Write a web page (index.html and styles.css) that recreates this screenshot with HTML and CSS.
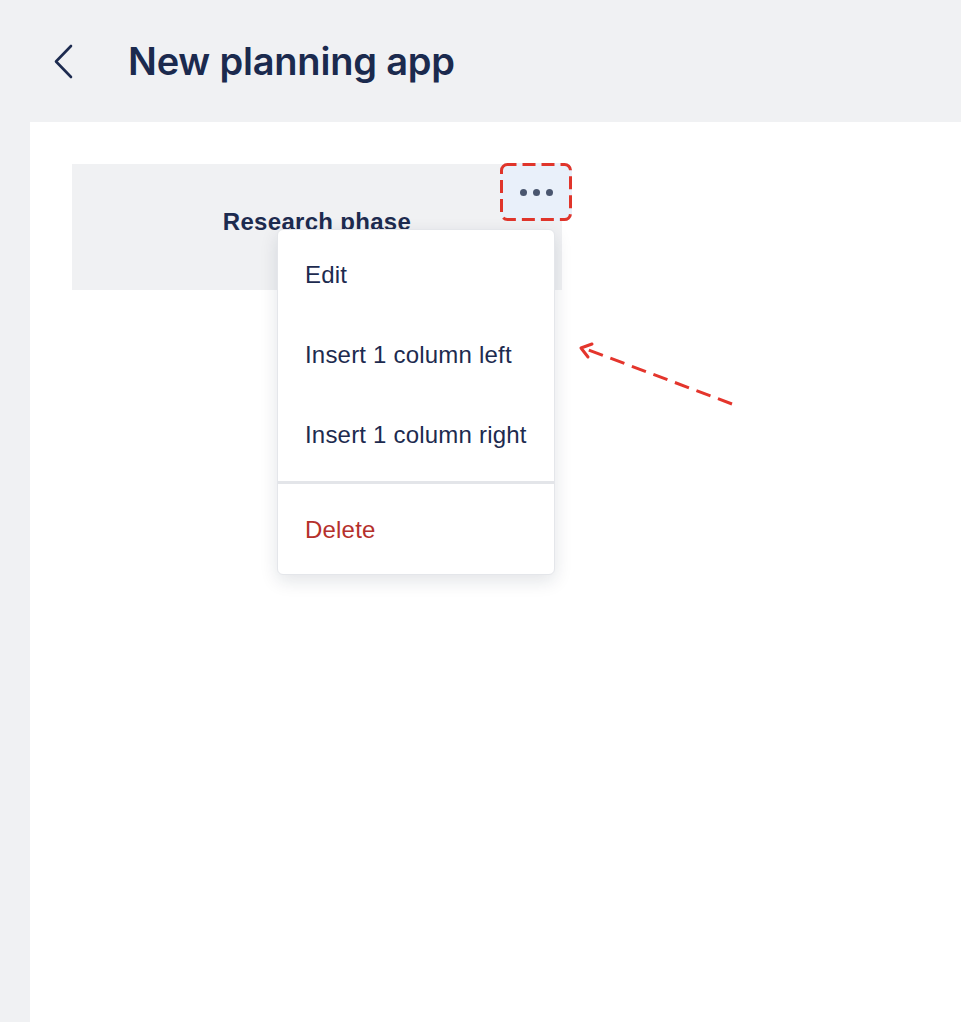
FILE: index.html
```html
<!DOCTYPE html>
<html lang="en">
<head>
    <meta charset="UTF-8">
    <meta name="viewport" content="width=device-width, initial-scale=1.0">
    <title>New planning app</title>
    <link rel="stylesheet" href="styles.css">
</head>
<body>
    <header class="topbar">
        <button class="back-btn" aria-label="Back">
            <svg width="22" height="36" viewBox="0 0 22 36">
                <polyline points="19,2 4,17.5 19,33" fill="none" stroke="#1d2b4f" stroke-width="2.6" stroke-linecap="round" stroke-linejoin="round"/>
            </svg>
        </button>
        <h1 class="page-title">New planning app</h1>
    </header>

    <main class="board">
        <div class="column">
            <div class="column-title">Research phase</div>

            <button class="more-btn" aria-label="More options">
                <span class="dot"></span><span class="dot"></span><span class="dot"></span>
                <!-- dashed highlight drawn around the button -->
                <svg class="more-outline" width="72" height="58" viewBox="0 0 72 58">
                    <rect x="1.5" y="1.5" width="69" height="55" rx="6" fill="none" stroke="#e0352b" stroke-width="3" stroke-dasharray="13 6" stroke-dashoffset="4"/>
                </svg>
            </button>

            <div class="menu">
                <div class="menu-group">
                    <div class="menu-item">Edit</div>
                    <div class="menu-item">Insert 1 column left</div>
                    <div class="menu-item">Insert 1 column right</div>
                </div>
                <div class="menu-group">
                    <div class="menu-item danger">Delete</div>
                </div>
            </div>
        </div>
    </main>

    <!-- annotation arrow pointing at the menu -->
    <svg class="note-arrow" width="961" height="1022" viewBox="0 0 961 1022">
        <line x1="732" y1="404" x2="586" y2="349" stroke="#e4352c" stroke-width="3" stroke-dasharray="15 8"/>
        <polyline points="592,344 581,348 588,357" fill="none" stroke="#e4352c" stroke-width="3" stroke-linecap="round" stroke-linejoin="round"/>
    </svg>
</body>
</html>
```

FILE: styles.css
```css
body {
    margin: 0;
    min-height: 1022px;
    background-color: #f0f1f3;
    font-family: "Liberation Sans", Arial, sans-serif;
    color: #1d2b4f;
    display: flex;
    flex-direction: column;
}
.topbar {
    height: 122px;
    display: flex;
    align-items: center;
    padding-left: 52px;
    box-sizing: border-box;
}
.back-btn {
    border: 0;
    background: none;
    padding: 0;
    margin: 2px 54px 0 0;
    display: flex;
}
.page-title {
    margin: 0;
    font-family: Inter, "Liberation Sans", sans-serif;
    font-weight: 600;
    font-size: 38px;
    letter-spacing: -0.2px;
    color: #1b2a4e;
}
.board {
    flex: 1;
    margin-left: 30px;
    background-color: #fff;
    padding: 42px 0 0 42px;
}
.column {
    position: relative;
    width: 490px;
    height: 126px;
    background-color: #f0f1f3;
}
.column-title {
    padding-top: 44px;
    text-align: center;
    font-weight: bold;
    font-size: 24px;
    letter-spacing: 0.3px;
    line-height: 28px;
    color: #1d2b4f;
}
.more-btn {
    position: absolute;
    top: -1px;
    right: -10px;
    width: 72px;
    height: 58px;
    border: 0;
    border-radius: 7px;
    background-color: #e9f0fa;
    display: flex;
    align-items: center;
    justify-content: center;
    gap: 6px;
    padding: 0 0 0 1px;
}
.more-outline {
    position: absolute;
    left: 0;
    top: 0;
}
.dot {
    width: 7px;
    height: 7px;
    border-radius: 50%;
    background-color: #4a566f;
}
.menu {
    position: absolute;
    left: 205px;
    top: 65px;
    width: 278px;
    background-color: #fff;
    border: 1px solid #e4e6ea;
    border-radius: 6px;
    box-sizing: border-box;
    box-shadow: 0 6px 18px rgba(20, 30, 60, 0.12);
    padding: 5px 0 4px;
}
.menu-group + .menu-group {
    border-top: 3px solid #e3e5e9;
    padding-top: 6px;
    margin-top: 6px;
}
.menu-item {
    height: 80px;
    display: flex;
    align-items: center;
    padding-left: 27px;
    font-size: 24px;
    letter-spacing: 0.2px;
    color: #1d2b4f;
}
.menu-item.danger {
    color: #b5302b;
}
.note-arrow {
    position: absolute;
    left: 0;
    top: 0;
    pointer-events: none;
}
```
